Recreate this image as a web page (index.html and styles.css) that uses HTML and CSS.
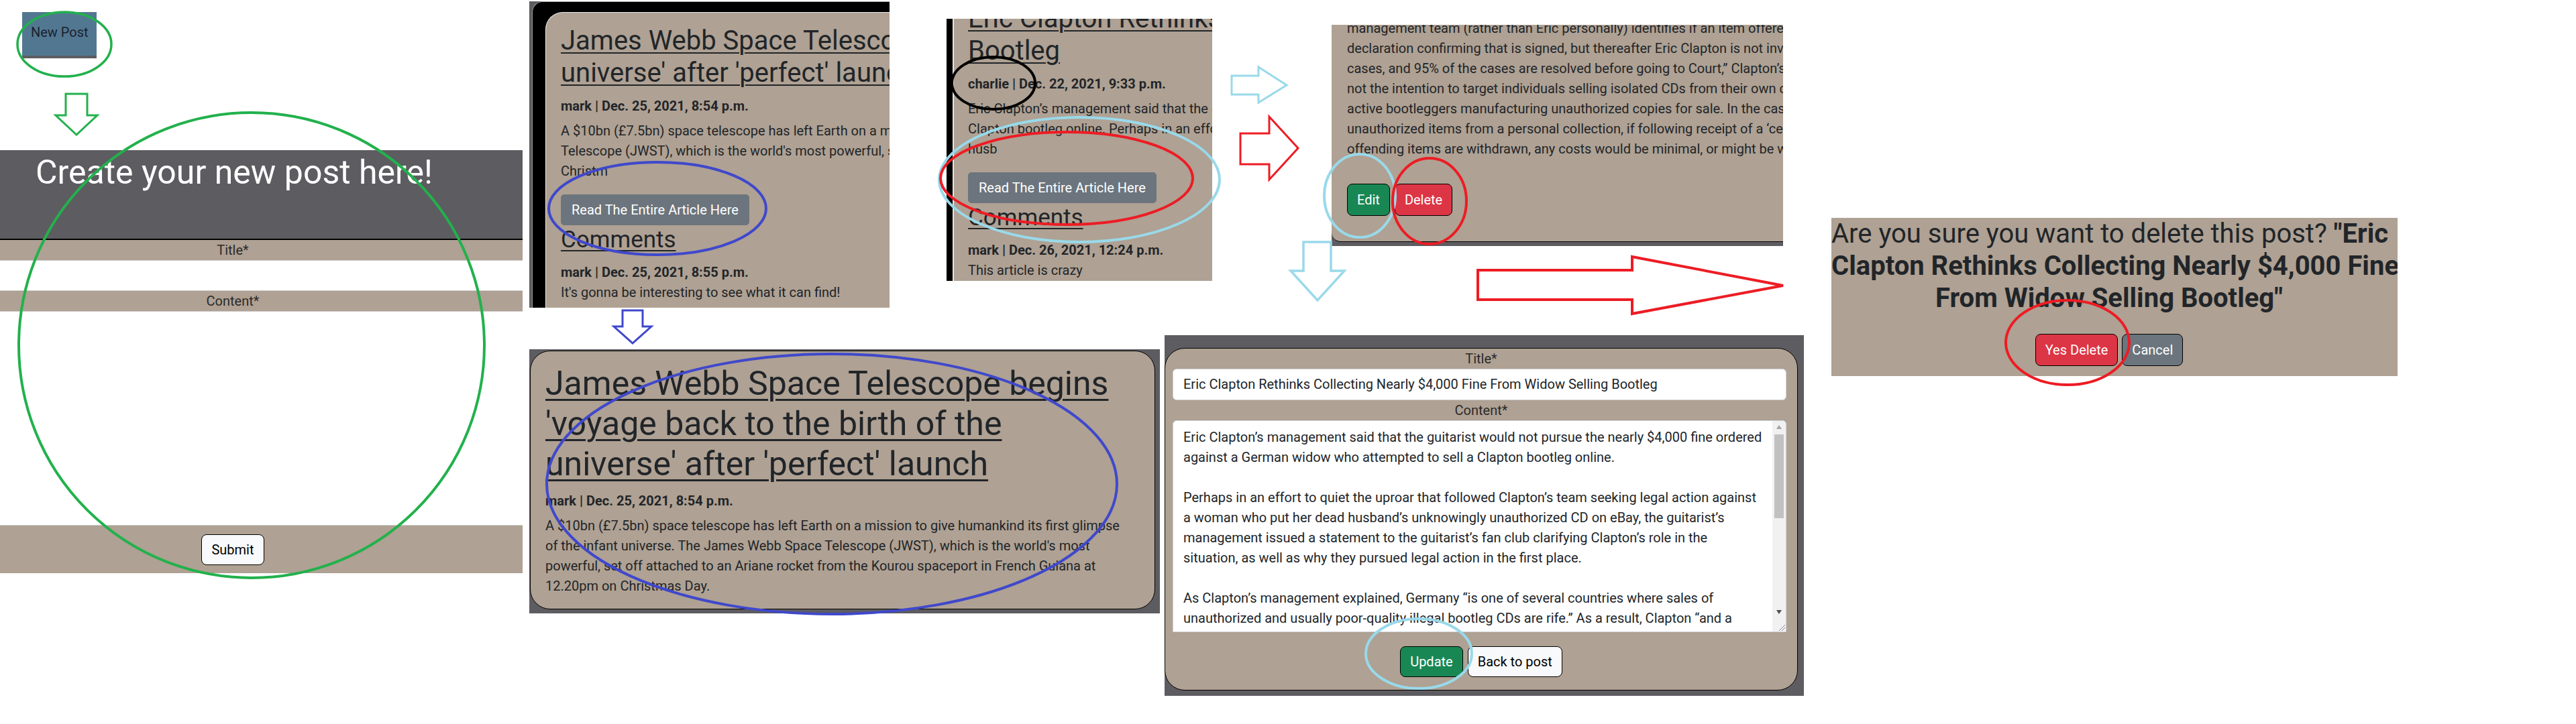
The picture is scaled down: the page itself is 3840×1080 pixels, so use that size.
FILE: index.html
```html
<!DOCTYPE html>
<html lang="en">
<head>
<meta charset="utf-8">
<title>Blog workflow</title>
<link rel="stylesheet" href="styles.css">
</head>
<body>
<div class="canvas">

  <section class="shot create">
    <div class="newpost-wrap"><div class="newpost">New Post</div></div>
    <header class="create-head"><h1>Create your new post here!</h1></header>
    <div class="form-label">Title*</div>
    <div class="blank-input"></div>
    <div class="form-label">Content*</div>
    <div class="blank-area"></div>
    <div class="submit-bar"><span class="btn btn-light btn-submit">Submit</span></div>
  </section>

  <section class="shot list-top">
    <div class="black-frame">
      <div class="tan-card">
        <h2 class="post-title"><span class="u">James Webb Space Telescope begins 'voyage back to the birth of the<br>universe' after 'perfect' launch</span></h2>
        <p class="meta">mark | Dec. 25, 2021, 8:54 p.m.</p>
        <p class="excerpt">A $10bn (£7.5bn) space telescope has left Earth on a mission to give humankind its first glimpse of the infant universe. The James Webb Space<br>Telescope (JWST), which is the world's most powerful, set off attached to an Ariane rocket from the Kourou spaceport in French Guiana at 12.20pm on<br>Christm</p>
        <span class="btn btn-secondary btn-read">Read The Entire Article Here</span>
        <h3 class="comments-title"><span class="u">Comments</span></h3>
        <p class="meta tight">mark | Dec. 25, 2021, 8:55 p.m.</p>
        <p class="comment">It's gonna be interesting to see what it can find!</p>
      </div>
    </div>
  </section>

  <section class="shot detail">
    <div class="detail-card">
      <div class="detail-body">
        <h1 class="detail-title"><span class="u">James Webb Space Telescope begins 'voyage back to the birth of the universe' after 'perfect' launch</span></h1>
        <p class="meta">mark | Dec. 25, 2021, 8:54 p.m.</p>
        <p class="detail-text">A $10bn (£7.5bn) space telescope has left Earth on a mission to give humankind its first glimpse<br>of the infant universe. The James Webb Space Telescope (JWST), which is the world's most<br>powerful, set off attached to an Ariane rocket from the Kourou spaceport in French Guiana at<br>12.20pm on Christmas Day.</p>
      </div>
    </div>
  </section>

  <section class="shot list-crop">
    <div class="tan-card">
      <h2 class="post-title"><span class="u">Eric Clapton Rethinks Collecting Nearly $4,000 Fine From Widow Selling<br>Bootleg</span></h2>
      <p class="meta">charlie | Dec. 22, 2021, 9:33 p.m.</p>
      <p class="excerpt">Eric Clapton’s management said that the guitarist would not pursue the nearly $4,000 fine ordered against a German widow who attempted to sell a<br>Clapton bootleg online. Perhaps in an effort to quiet the uproar that followed Clapton’s team seeking legal action against a woman who put her dead<br>husb</p>
      <span class="btn btn-secondary btn-read">Read The Entire Article Here</span>
      <h3 class="comments-title"><span class="u">Comments</span></h3>
      <p class="meta tight">mark | Dec. 26, 2021, 12:24 p.m.</p>
      <p class="comment">This article is crazy</p>
    </div>
  </section>

  <section class="shot actions-crop">
    <div class="actions-card">
      <p class="actions-text">management team (rather than Eric personally) identifies if an item offered for sale is unauthorised and a<br>declaration confirming that is signed, but thereafter Eric Clapton is not involved in the proceedings in any<br>cases, and 95% of the cases are resolved before going to Court,” Clapton’s management wrote. “It is<br>not the intention to target individuals selling isolated CDs from their own collection, but to stop<br>active bootleggers manufacturing unauthorized copies for sale. In the case of a private individual selling<br>unauthorized items from a personal collection, if following receipt of a ‘cease and desist’ letter the<br>offending items are withdrawn, any costs would be minimal, or might be waived.</p>
      <div class="btn-row">
        <span class="btn btn-success">Edit</span>
        <span class="btn btn-danger">Delete</span>
      </div>
    </div>
  </section>

  <section class="shot edit-form">
    <div class="edit-card">
      <div class="edit-label">Title*</div>
      <div class="edit-input">Eric Clapton Rethinks Collecting Nearly $4,000 Fine From Widow Selling Bootleg</div>
      <div class="edit-label">Content*</div>
      <div class="edit-area">
        <div class="edit-area-text">Eric Clapton’s management said that the guitarist would not pursue the nearly $4,000 fine ordered<br>against a German widow who attempted to sell a Clapton bootleg online.<br><br>Perhaps in an effort to quiet the uproar that followed Clapton’s team seeking legal action against<br>a woman who put her dead husband’s unknowingly unauthorized CD on eBay, the guitarist’s<br>management issued a statement to the guitarist’s fan club clarifying Clapton’s role in the<br>situation, as well as why they pursued legal action in the first place.<br><br>As Clapton’s management explained, Germany “is one of several countries where sales of<br>unauthorized and usually poor-quality illegal bootleg CDs are rife.” As a result, Clapton “and a<br>significant number of other artists have, for many years, instructed lawyers in Germany to act</div>
        <div class="scrollbar">
          <div class="sb-btn"><span class="tri-up"></span></div>
          <div class="sb-thumb"></div>
          <div class="sb-space"></div>
          <div class="sb-btn"><span class="tri-down"></span></div>
          <div class="sb-grip">
            <svg width="14" height="14" viewBox="0 0 14 14"><path d="M13 4 L4 13 M13 8 L8 13" stroke="#8a8a8a" stroke-width="1" fill="none"/></svg>
          </div>
        </div>
      </div>
      <div class="btn-row center">
        <span class="btn btn-success">Update</span>
        <span class="btn btn-light">Back to post</span>
      </div>
    </div>
  </section>

  <section class="shot confirm">
    <h2 class="confirm-title">Are you sure you want to delete this post? <strong>"Eric<br>Clapton Rethinks Collecting Nearly $4,000 Fine<br>From Widow Selling Bootleg"</strong></h2>
    <div class="btn-row center confirm-btns">
      <span class="btn btn-danger">Yes Delete</span>
      <span class="btn btn-secondary">Cancel</span>
    </div>
  </section>

  <svg class="annotations" width="3840" height="1080" viewBox="0 0 3840 1080" fill="none">
    <g stroke="#22b14c">
      <ellipse cx="96" cy="66" rx="70" ry="48" stroke-width="3.5"/>
      <polygon points="98,140 130,140 130,172 145,172 114,201 83,172 98,172" stroke-width="3"/>
      <ellipse cx="375" cy="515" rx="347" ry="347" stroke-width="4"/>
    </g>
    <g stroke="#3f48cc">
      <ellipse cx="980" cy="311" rx="162" ry="69" stroke-width="4"/>
      <polygon points="928,463 958,463 958,487 971,487 943,512 915,487 928,487" stroke-width="3"/>
      <ellipse cx="1240" cy="722" rx="425" ry="194" stroke-width="4"/>
    </g>
    <ellipse cx="1481" cy="124" rx="62" ry="39" stroke="#000" stroke-width="4"/>
    <g stroke="#99d9ea">
      <ellipse cx="1609" cy="268" rx="209" ry="93" stroke-width="4"/>
      <polygon points="1836,113 1876,113 1876,100 1918,127 1876,153 1876,141 1836,141" stroke-width="3"/>
      <ellipse cx="2027" cy="292" rx="53" ry="62" stroke-width="4"/>
      <polygon points="1943,361 1984,361 1984,404 2004,404 1964,448 1924,404 1943,404" stroke-width="3.5"/>
      <ellipse cx="2115" cy="975" rx="79" ry="52" stroke-width="4"/>
    </g>
    <g stroke="#ed1c24">
      <ellipse cx="1590" cy="266" rx="188" ry="69" stroke-width="4"/>
      <polygon points="1849,199 1892,199 1892,174 1935,221 1892,268 1892,245 1849,245" stroke-width="3"/>
      <ellipse cx="2131" cy="300" rx="55" ry="64" stroke-width="4"/>
      <polygon points="2203,403 2433,403 2433,383 2658,426 2433,468 2433,447 2203,447" stroke-width="4"/>
      <ellipse cx="3082" cy="511" rx="92" ry="63" stroke-width="4"/>
    </g>
  </svg>
</div>
</body>
</html>
```
FILE: styles.css
```css
* { box-sizing: border-box; }
html, body { margin: 0; padding: 0; }
body {
  background: #fff;
  font-family: Roboto, "Liberation Sans", Arial, sans-serif;
  color: #212529;
}
.canvas {
  position: relative;
  width: 3840px;
  height: 1080px;
  overflow: hidden;
  background: #fff;
}
.shot { position: absolute; overflow: hidden; }
.u { text-decoration: underline; text-decoration-thickness: 2px; text-underline-offset: 4px; }
p { margin: 0; }

/* buttons */
.btn {
  display: inline-block;
  font-size: 20px;
  line-height: 30px;
  padding: 8px 14px;
  border: 1px solid #000;
  border-radius: 8px;
  color: #fff;
  white-space: nowrap;
}
.btn-success { background: #198754; }
.btn-danger { background: #dc3545; }
.btn-secondary { background: #6c757d; }
.btn-light { background: #f8f9fa; color: #000; }
.btn-row { display: flex; gap: 7px; }
.btn-row.center { justify-content: center; }

/* panel 1: create */
.create { left: 0; top: 0; width: 779px; height: 855px; }
.newpost-wrap { padding: 18px 0 0 33px; }
.newpost {
  width: 111px;
  height: 69px;
  background: #527891;
  border-bottom: 4px solid #5d5c61;
  color: #1b2030;
  font-size: 20px;
  line-height: 30px;
  padding: 15px 0 0 13px;
}
.create-head {
  margin-top: 137px;
  height: 134px;
  background: #5d5c61;
  border-bottom: 2px solid #000;
}
.create-head h1 {
  margin: 0;
  padding: 3px 0 0 53px;
  font-size: 50px;
  line-height: 60px;
  font-weight: 400;
  color: #fff;
}
.form-label {
  height: 30px;
  line-height: 30px;
  font-size: 20px;
  text-align: center;
  background: #afa193;
  padding-right: 85px;
  color: #2b2b2b;
}
.blank-input { height: 46px; background: #fff; border-top: 1px solid #cfcfcf; border-bottom: 1px solid #cfcfcf; }
.blank-area { height: 320px; background: #fff; border-top: 1px solid #cfcfcf; border-bottom: 1px solid #cfcfcf; }
.submit-bar { height: 71px; background: #afa193; padding: 13px 85px 0 0; display: flex; justify-content: center; align-items: flex-start; }
.btn-submit { padding: 7px 14px; }

/* list cards */
.list-top { left: 789px; top: 2px; width: 537px; height: 457px; background: #5d5c61; }
.black-frame {
  margin-left: 4px;
  height: 100%;
  background: #000;
  border-top-left-radius: 16px;
  border-top: 1px solid #9a9a9a;
  border-left: 1px solid #9a9a9a;
  padding: 15px 0 0 19px;
}
.tan-card {
  height: 100%;
  width: 1500px;
  background: #afa193;
  border-top-left-radius: 26px;
  border-top: 1px solid #eee;
  border-left: 1px solid #eee;
  padding: 18px 0 0 22px;
  display: flow-root;
}
.post-title { margin: 0 0 10px; font-size: 40px; line-height: 48px; font-weight: 400; white-space: nowrap; }
.meta { font-size: 20px; line-height: 30px; font-weight: 700; margin-bottom: 7px; white-space: nowrap; }
.meta.tight { margin-bottom: 0; }
.excerpt { font-size: 20px; line-height: 30px; margin-bottom: 20px; white-space: nowrap; }
.btn-read { display: block; width: max-content; padding: 7px 15px; border: 1px solid #6c757d; border-radius: 5px; }
.comments-title { margin: 1px 0 12px; font-size: 35px; line-height: 42px; font-weight: 400; }
.comment { font-size: 20px; line-height: 30px; white-space: nowrap; }

.list-crop { left: 1411px; top: 28px; width: 396px; height: 391px; background: #000; }
.list-crop .tan-card {
  margin-left: 9px;
  border-top: none;
  border-left: 2px solid #e6e6e6;
  border-radius: 0;
  padding: 0 0 0 21px;
}
.list-crop .post-title { margin-top: -24px; }

/* detail */
.detail { left: 789px; top: 521px; width: 940px; height: 394px; background: #5d5c61; padding: 2px 7px 6px 1px; }
.detail-card { height: 100%; background: #afa193; border: 1px solid #000; border-radius: 30px; padding: 18px 0 0 22px; }
.detail-body { width: 868px; }
.detail-title { margin: 0 0 10px; font-size: 50px; line-height: 60px; font-weight: 400; }
.detail-title .u { text-underline-offset: 6px; text-decoration-thickness: 3px; }
.detail-text { font-size: 20px; line-height: 30px; white-space: nowrap; }

/* edit / delete crop */
.actions-crop { left: 1985px; top: 37px; width: 673px; height: 330px; background: #5d5c61; }
.actions-card {
  height: 324px;
  background: #afa193;
  border-bottom: 1px solid #000;
  border-bottom-left-radius: 14px;
  padding: 0 0 0 23px;
  display: flow-root;
}
.actions-text { margin: -10px 0 37px; font-size: 20px; line-height: 30px; white-space: nowrap; }

/* edit form */
.edit-form { left: 1736px; top: 500px; width: 953px; height: 538px; background: #5d5c61; padding: 19px 9px 8px 0; }
.edit-card { height: 100%; background: #afa193; border: 1px solid #000; border-radius: 30px; }
.edit-label { height: 30px; line-height: 30px; font-size: 20px; text-align: center; color: #2b2b2b; }
.edit-input {
  margin: 0 16px 0 11px;
  height: 47px;
  background: #fff;
  border: 1px solid #ced4da;
  border-radius: 6px;
  padding: 0 15px;
  font-size: 20px;
  line-height: 45px;
  white-space: nowrap;
  overflow: hidden;
}
.edit-area {
  margin: 0 16px 0 11px;
  height: 316px;
  background: #fff;
  border: 1px solid #ced4da;
  border-radius: 6px 6px 0 0;
  display: flex;
  overflow: hidden;
}
.edit-area-text { flex: 1; padding: 9px 15px; font-size: 20px; line-height: 30px; white-space: nowrap; overflow: hidden; }
.scrollbar { width: 20px; background: #f1f1f1; display: flex; flex-direction: column; align-items: center; }
.sb-btn { height: 18px; width: 20px; display: flex; align-items: center; justify-content: center; }
.tri-up { width: 0; height: 0; border-left: 4px solid transparent; border-right: 4px solid transparent; border-bottom: 6px solid #a3a3a3; }
.tri-down { width: 0; height: 0; border-left: 4px solid transparent; border-right: 4px solid transparent; border-top: 6px solid #505050; }
.sb-thumb { margin-top: 2px; width: 14px; height: 125px; background: #c1c1c1; }
.sb-space { flex: 1; }
.sb-grip { height: 20px; width: 20px; display: flex; align-items: flex-end; justify-content: flex-end; background: #f1f1f1; }
.edit-card .btn-row { margin-top: 21px; }
.edit-card .btn { padding: 7px 14px; }

/* confirm */
.confirm { left: 2730px; top: 325px; width: 844px; height: 236px; background: #afa193; padding: 0 16px 15px 0; }
.confirm-title { margin: 0; font-size: 40px; line-height: 48px; font-weight: 400; text-align: center; white-space: nowrap; }
.confirm-btns { margin-top: 29px; gap: 6px; }

.annotations { position: absolute; left: 0; top: 0; pointer-events: none; }
```
